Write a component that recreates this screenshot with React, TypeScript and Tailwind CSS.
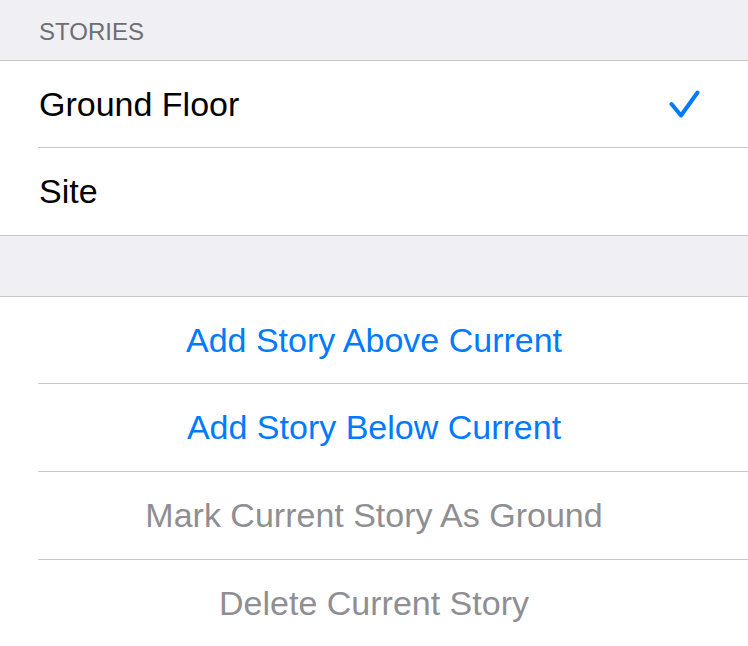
import React from 'react';

const font = { fontFamily: '"Liberation Sans", Arial, sans-serif' };

const Separator: React.FC = () => <div className="ml-[38px] h-px bg-[#c8c7cc]" />;

const Check: React.FC = () => (
  <svg width="32" height="32" viewBox="0 0 32 32" fill="none">
    <path d="M2.5 16 L12 27.5 L28.5 4.5" stroke="#007aff" strokeWidth="4" strokeLinecap="round" strokeLinejoin="round" />
  </svg>
);

const stories = [
  { name: 'Ground Floor', selected: true },
  { name: 'Site', selected: false },
];

const actions = [
  { label: 'Add Story Above Current', enabled: true },
  { label: 'Add Story Below Current', enabled: true },
  { label: 'Mark Current Story As Ground', enabled: false },
  { label: 'Delete Current Story', enabled: false },
];

function App() {
  return (
    <div className="w-[748px] h-[646px] overflow-hidden bg-[#efeff4]" style={font}>
      {/* Section header */}
      <div className="h-[60px] pt-[20px] pl-[39px] text-[24px] leading-none text-[#6d6d72]">STORIES</div>

      {/* Stories list */}
      <div className="bg-white border-y border-[#c8c7cc]">
        {stories.map((s, i) => (
          <React.Fragment key={s.name}>
            {i > 0 && <Separator />}
            <div
              className={
                'flex items-center justify-between pl-[39px] pr-[47px] text-[34px] text-black ' +
                (i === 0 ? 'h-[86px]' : 'h-[87px]')
              }
            >
              <span>{s.name}</span>
              {s.selected && <Check />}
            </div>
          </React.Fragment>
        ))}
      </div>

      <div className="h-[60px]" />

      {/* Actions */}
      <div className="bg-white border-t border-[#c8c7cc]">
        {actions.map((a, i) => (
          <React.Fragment key={a.label}>
            {i > 0 && <Separator />}
            <div
              className={
                'flex items-center justify-center text-[34px] ' +
                (i === 0 ? 'h-[86px] ' : 'h-[87px] ') +
                (a.enabled ? 'text-[#007aff]' : 'text-[#8e8e93]')
              }
            >
              {a.label}
            </div>
          </React.Fragment>
        ))}
      </div>
    </div>
  );
}

export default App;
